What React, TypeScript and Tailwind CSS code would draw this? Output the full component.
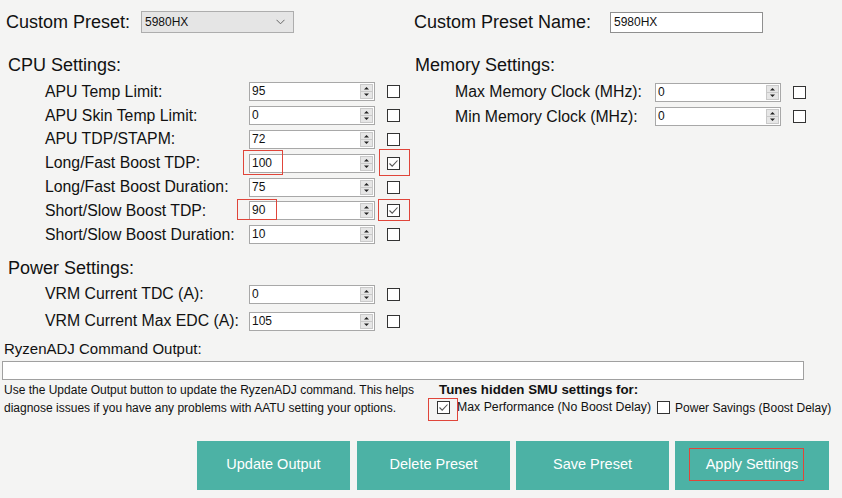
import React from "react";

const FONT = { fontFamily: '"Liberation Sans", Arial, sans-serif' };

function Spinner() {
  return (
    <svg width="13" height="15" viewBox="0 0 13 15" className="shrink-0">
      <rect x="0.5" y="0.5" width="12" height="14" fill="#e6e6e6" stroke="#c9c9c9" />
      <line x1="1" y1="7.5" x2="12" y2="7.5" stroke="#c9c9c9" />
      <polygon points="4,5.5 9,5.5 6.5,3" fill="#222" />
      <polygon points="4,9.5 9,9.5 6.5,12" fill="#222" />
    </svg>
  );
}

function NumInput({ value }: { value: string }) {
  return (
    <div className="flex items-center w-[126px] h-[19px] border border-[#a8a8a8] bg-white pr-[1px]">
      <span className="flex-1 pl-[2px] text-[12px] leading-[17px] text-[#111]">{value}</span>
      <Spinner />
    </div>
  );
}

function Check({ checked = false }: { checked?: boolean }) {
  return (
    <div className="w-[13px] h-[13px] border border-[#333] bg-white shrink-0 flex items-center justify-center">
      {checked && (
        <svg width="11" height="11" viewBox="0 0 11 11">
          <path d="M1.5 5.5 L4.2 8.2 L9.5 2.5" fill="none" stroke="#555" strokeWidth="1.1" />
        </svg>
      )}
    </div>
  );
}

function Row({ label, value, checked, labelW = "w-[204px]", h = "h-[23.8px]" }: { label: string; value: string; checked?: boolean; labelW?: string; h?: string }) {
  return (
    <div className={`flex items-center ${h}`}>
      <div className={`${labelW} text-[15.8px] text-[#111] leading-[20px]`}>{label}</div>
      <NumInput value={value} />
      <div className="ml-[12px]">
        <Check checked={checked} />
      </div>
    </div>
  );
}

function RedBox({ className }: { className: string }) {
  return <div className={`absolute border border-[#e0453a] ${className}`} />;
}

export default function App() {
  return (
    <div className="relative w-[842px] h-[498px] bg-[#f4f4f3] overflow-hidden text-[#111]" style={FONT}>
      {/* top row */}
      <div className="flex items-center h-[22px] mt-[11px]">
        <div className="flex items-center w-[414px] pl-[6px]">
          <div className="w-[135px] text-[18px] leading-[22px]">Custom Preset:</div>
          <div className="flex items-center justify-between w-[153px] h-[22px] border border-[#adadad] bg-[#e5e5e5] pl-[3px] pr-[8px]">
            <span className="text-[12px]">5980HX</span>
            <svg width="9" height="6" viewBox="0 0 9 6">
              <path d="M0.5 0.8 L4.5 4.8 L8.5 0.8" fill="none" stroke="#666" strokeWidth="1" />
            </svg>
          </div>
        </div>
        <div className="flex items-center">
          <div className="w-[196px] text-[18px] leading-[22px]">Custom Preset Name:</div>
          <div className="w-[153px] h-[21px] border border-[#8f8f8f] bg-white pl-[3px] text-[12px] leading-[19px]">5980HX</div>
        </div>
      </div>

      {/* columns */}
      <div className="flex mt-[20px]">
        <div className="w-[415px]">
          <div className="pl-[8px] h-[24px] text-[18px] leading-[24px]">CPU Settings:</div>
          <div className="mt-[3px] pl-[45px]">
            <Row label="APU Temp Limit:" value="95" />
            <Row label="APU Skin Temp Limit:" value="0" />
            <Row label="APU TDP/STAPM:" value="72" />
            <Row label="Long/Fast Boost TDP:" value="100" checked />
            <Row label="Long/Fast Boost Duration:" value="75" />
            <Row label="Short/Slow Boost TDP:" value="90" checked />
            <Row label="Short/Slow Boost Duration:" value="10" />
          </div>
          <div className="pl-[8px] mt-[9px] h-[24px] text-[18px] leading-[24px]">Power Settings:</div>
          <div className="mt-[1px] pl-[45px]">
            <Row label="VRM Current TDC (A):" value="0" h="h-[27px]" />
            <Row label="VRM Current Max EDC (A):" value="105" h="h-[27px]" />
          </div>
        </div>
        <div className="flex-1">
          <div className="h-[24px] text-[18px] leading-[24px]">Memory Settings:</div>
          <div className="mt-[3px] pl-[40px]">
            <Row label="Max Memory Clock (MHz):" value="0" labelW="w-[200px]" h="h-[24.5px]" />
            <Row label="Min Memory Clock (MHz):" value="0" labelW="w-[200px]" h="h-[24.5px]" />
          </div>
        </div>
      </div>

      {/* bottom */}
      <div className="mt-[4px] pl-[4px] h-[18px] text-[15px] leading-[20px]">RyzenADJ Command Output:</div>
      <div className="ml-[2px] mt-[4px] w-[802px] h-[19px] border border-[#a0a0a0] bg-white" />
      <div className="flex mt-[1px]">
        <div className="w-[437px] pl-[4px] text-[12px] leading-[18px]">
          <div>Use the Update Output button to update the RyzenADJ command. This helps</div>
          <div>diagnose issues if you have any problems with AATU setting your options.</div>
        </div>
        <div>
          <div className="pl-[2px] h-[18px] text-[13.3px] font-bold leading-[18px]">Tunes hidden SMU settings for:</div>
          <div className="flex items-center h-[18px] text-[12.3px]">
            <Check checked />
            <span className="ml-[7px]">Max Performance (No Boost Delay)</span>
            <div className="ml-[6px]">
              <Check />
            </div>
            <span className="ml-[5px] text-[12px]">Power Savings (Boost Delay)</span>
          </div>
        </div>
      </div>

      <div className="flex mt-[24px] pl-[197px] gap-[6px]">
        {["Update Output", "Delete Preset", "Save Preset", "Apply Settings"].map((t, i) => (
          <div
            key={t}
            className={`flex items-center justify-center h-[49px] ${i === 3 ? "w-[154px]" : "w-[153px]"} ${i === 1 ? "ml-[1px]" : ""} bg-[#4cb2a5] text-white text-[14.5px]`}
          >
            {t}
          </div>
        ))}
      </div>

      {/* annotation red boxes */}
      <RedBox className="left-[243px] top-[150px] w-[40px] h-[25px]" />
      <RedBox className="left-[379px] top-[149px] w-[31px] h-[27px]" />
      <RedBox className="left-[237px] top-[199px] w-[40px] h-[21px]" />
      <RedBox className="left-[378px] top-[199px] w-[32px] h-[22px]" />
      <RedBox className="left-[428px] top-[398px] w-[30px] h-[23px]" />
      <RedBox className="left-[689px] top-[448px] w-[115px] h-[33px]" />
    </div>
  );
}
